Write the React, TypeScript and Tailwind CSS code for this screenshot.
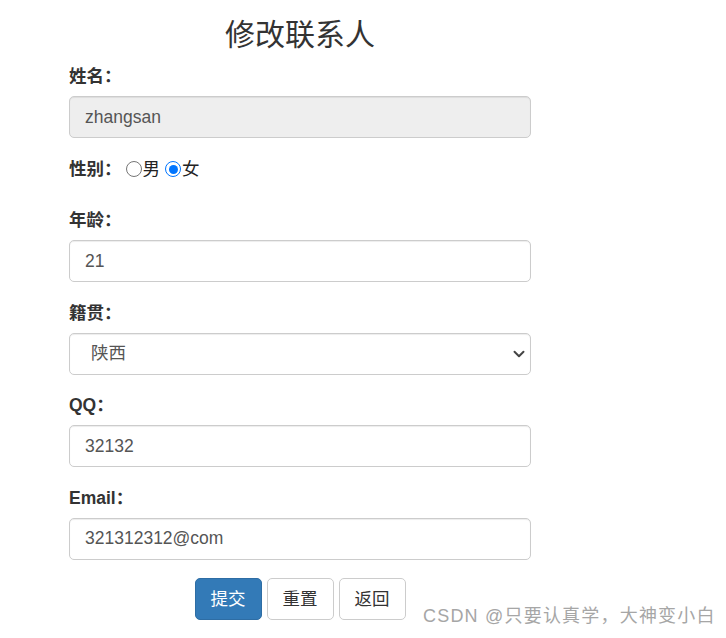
import { ChevronDown } from 'lucide-react'

const font = { fontFamily: '"Liberation Sans", "Noto Sans CJK SC", sans-serif' }

const inputCls =
  'block w-full h-[42px] px-[15px] text-[17.5px] text-[#555] border border-[#ccc] rounded-[5px] shadow-[inset_0_1px_1px_rgba(0,0,0,0.075)] outline-none'

function Field({ label, children }: { label: string; children: React.ReactNode }) {
  return (
    <div className="mb-[18.5px]">
      <label className="block h-[25px] leading-[25px] mb-[7px] text-[17.5px] font-bold text-[#333]">
        {label}
      </label>
      {children}
    </div>
  )
}

// hand-drawn radio so the size matches the 125% screenshot
function Radio({ checked }: { checked?: boolean }) {
  return checked ? (
    <span className="w-[16px] h-[16px] rounded-full border-[1.5px] border-[#0075ff] bg-white flex items-center justify-center">
      <span className="w-[9px] h-[9px] rounded-full bg-[#0075ff]" />
    </span>
  ) : (
    <span className="w-[16px] h-[16px] rounded-full border border-[#767676] bg-white" />
  )
}

export default function App() {
  return (
    <div className="relative w-[726px] h-[638px] bg-white overflow-hidden" style={font}>
      <div className="ml-[69px] w-[462px] pt-[18px]">
        <h3 className="text-center text-[30px] leading-[33px] font-normal text-[#333] mb-[13px]">
          修改联系人
        </h3>

        <Field label="姓名：">
          <input className={`${inputCls} bg-[#eee]`} value="zhangsan" readOnly />
        </Field>

        <div className="h-[33px] mb-[18.5px] flex items-start text-[17.5px] text-[#333]">
          <span className="h-[25px] leading-[25px] font-bold">性别：</span>
          <label className="flex items-center h-[25px] ml-[4px]">
            <Radio />
            <span className="ml-[1px] text-[#222]">男</span>
          </label>
          <label className="flex items-center h-[25px] ml-[5px]">
            <Radio checked />
            <span className="ml-[1px] text-[#222]">女</span>
          </label>
        </div>

        <Field label="年龄：">
          <input className={`${inputCls} bg-white`} defaultValue="21" />
        </Field>

        <Field label="籍贯：">
          <div className="relative">
            <select
              className={`${inputCls} bg-white appearance-none pl-[21px]`}
              defaultValue="陕西"
            >
              <option>陕西</option>
              <option>北京</option>
              <option>上海</option>
            </select>
            <ChevronDown
              size={18}
              strokeWidth={2.6}
              className="absolute right-[3px] top-[12px] text-[#444] pointer-events-none"
            />
          </div>
        </Field>

        <Field label="QQ：">
          <input className={`${inputCls} bg-white`} defaultValue="32132" />
        </Field>

        <Field label="Email：">
          <input className={`${inputCls} bg-white`} defaultValue="321312312@com" />
        </Field>

        <div className="flex justify-center gap-[5px]">
          <button className="h-[42px] px-[15px] text-[17.5px] text-white bg-[#337ab7] border border-[#2e6da4] rounded-[5px]">
            提交
          </button>
          <button className="h-[42px] px-[15px] text-[17.5px] text-[#333] bg-white border border-[#ccc] rounded-[5px]">
            重置
          </button>
          <button className="h-[42px] px-[15px] text-[17.5px] text-[#333] bg-white border border-[#ccc] rounded-[5px]">
            返回
          </button>
        </div>
      </div>

      <div className="absolute left-[423px] top-[604px] text-[18px] leading-[24px] tracking-[1.2px] text-[#a6a6a6] whitespace-nowrap">
        CSDN @只要认真学，大神变小白
      </div>
    </div>
  )
}
